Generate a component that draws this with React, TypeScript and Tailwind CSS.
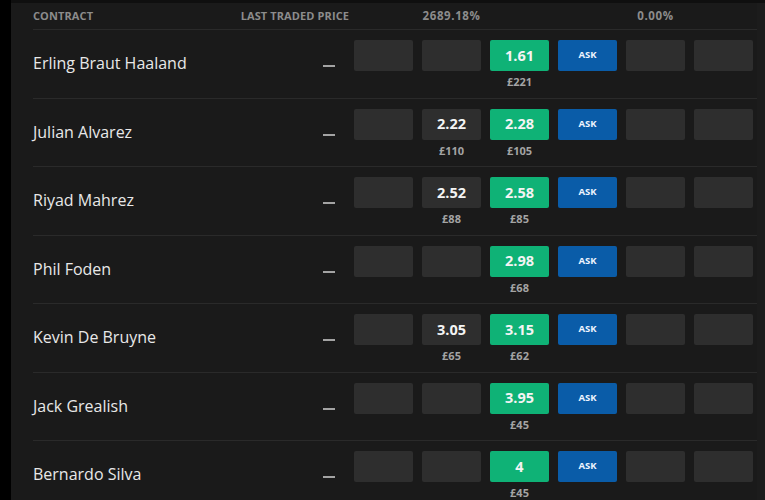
import React from "react";

type Row = {
  name: string;
  b2?: string;
  b2s?: string;
  g: string;
  gs: string;
};

const rows: Row[] = [
  { name: "Erling Braut Haaland", g: "1.61", gs: "£221" },
  { name: "Julian Alvarez", b2: "2.22", b2s: "£110", g: "2.28", gs: "£105" },
  { name: "Riyad Mahrez", b2: "2.52", b2s: "£88", g: "2.58", gs: "£85" },
  { name: "Phil Foden", g: "2.98", gs: "£68" },
  { name: "Kevin De Bruyne", b2: "3.05", b2s: "£65", g: "3.15", gs: "£62" },
  { name: "Jack Grealish", g: "3.95", gs: "£45" },
  { name: "Bernardo Silva", g: "4", gs: "£45" },
];

const sans = { fontFamily: '"Open Sans", "Noto Sans", sans-serif' };

function Cell({
  value,
  sub,
  kind,
}: {
  value?: string;
  sub?: string;
  kind: "empty" | "green" | "blue";
}) {
  const bg =
    kind === "green"
      ? "bg-[#0fb276]"
      : kind === "blue"
      ? "bg-[#0a5ca8]"
      : "bg-[#2e2e2e]";
  return (
    <div className="flex w-[59px] flex-col items-center">
      <div
        className={`flex h-[31px] w-[59px] items-center justify-center rounded-[2px] ${bg}`}
      >
        {kind === "blue" ? (
          <span className="text-[9.5px] font-bold text-[#eef4ff]">ASK</span>
        ) : value ? (
          <span className="text-[14.5px] font-bold text-[#f4f4f4]">{value}</span>
        ) : null}
      </div>
      {sub ? (
        <div className="mt-[4px] text-[11px] font-bold leading-[14px] text-[#a4a4a4]">
          {sub}
        </div>
      ) : null}
    </div>
  );
}

export default function App() {
  return (
    <div
      className="flex h-[500px] w-[765px] overflow-hidden bg-[#1a1a1a]"
      style={sans}
    >
      <div className="w-[11px] shrink-0 bg-black" />
      <div className="flex min-w-0 flex-1 flex-col">
        <div className="h-[3px] shrink-0 bg-[#0f0f0f]" />
        <div className="flex flex-1">
          <div className="flex min-w-0 flex-1 flex-col pl-[22px]">
            {/* header */}
            <div className="flex h-[27px] shrink-0 items-center border-b border-[#2a2a2a] pr-[4px]">
              <div className="flex-1 text-[11px] font-bold tracking-[0.1px] text-[#8c8c8c]">
                CONTRACT
              </div>
              <div className="mr-[5px] text-[11px] font-bold tracking-[0.1px] text-[#8c8c8c]">
                LAST TRADED PRICE
              </div>
              <div className="flex gap-[9px] text-[11.5px] font-bold tracking-[0.6px] text-[#8c8c8c]">
                <div className="w-[59px]" />
                <div className="w-[59px] text-center">2689.18%</div>
                <div className="w-[59px]" />
                <div className="w-[59px]" />
                <div className="w-[59px] text-center">0.00%</div>
                <div className="w-[59px]" />
              </div>
            </div>
            {rows.map((r) => (
              <div
                key={r.name}
                className="flex h-[68.5px] shrink-0 border-b border-[#2a2a2a] pr-[4px] pt-[10px]"
              >
                <div className="flex h-[46px] flex-1 items-center text-[16px] text-[#e8e8e8]">
                  {r.name}
                </div>
                <div className="mr-[19px] flex h-[52px] items-center">
                  <div className="h-[2px] w-[12px] bg-[#a3a3a3]" />
                </div>
                <div className="flex gap-[9px]">
                  <Cell kind="empty" />
                  <Cell kind="empty" value={r.b2} sub={r.b2s} />
                  <Cell kind="green" value={r.g} sub={r.gs} />
                  <Cell kind="blue" />
                  <Cell kind="empty" />
                  <Cell kind="empty" />
                </div>
              </div>
            ))}
          </div>
          <div className="w-[8px] shrink-0 bg-[#1c1c1c]" />
        </div>
      </div>
    </div>
  );
}
